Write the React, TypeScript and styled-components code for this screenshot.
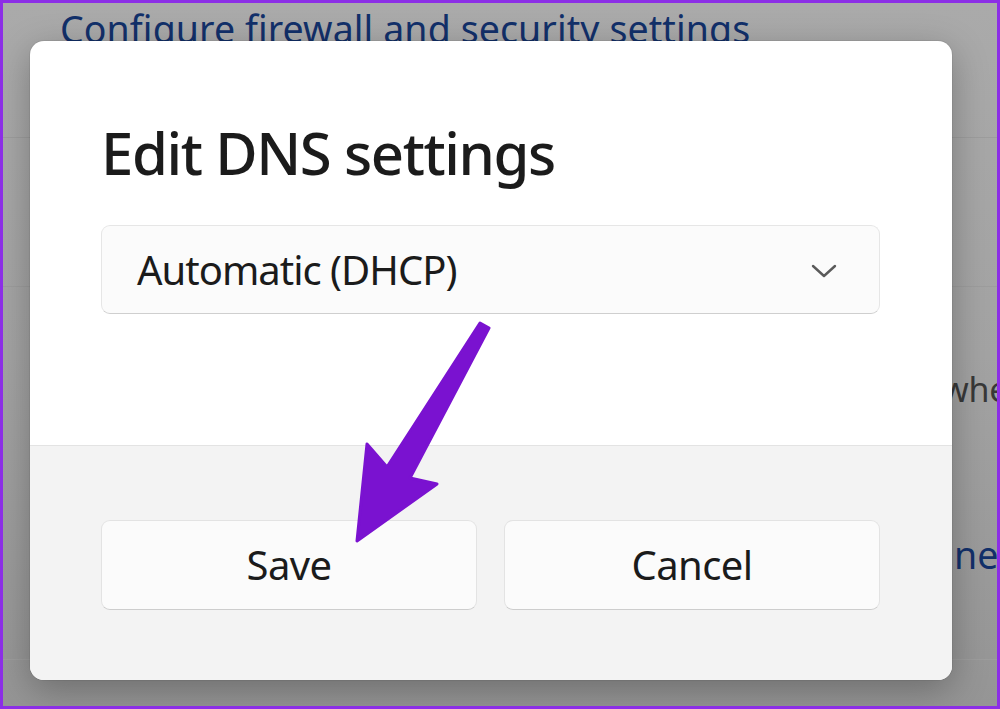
import styled, { createGlobalStyle } from "styled-components";

const GlobalStyle = createGlobalStyle`
  html, body {
    margin: 0;
    padding: 0;
    background: #ffffff;
  }
  * {
    box-sizing: border-box;
  }
`;

const FONT = `"Noto Sans", "Open Sans", sans-serif`;

const App = () => {
  return (
    <>
      <GlobalStyle />
      <Frame>
        <SettingsPage>
          <Row $height={135}>
            <LinkLine>Configure firewall and security settings</LinkLine>
          </Row>
          <Row $height={149} />
          <Row $height={373}>
            <DescLine>when this network is in range</DescLine>
            <LinkLine $indent={954} $top={118}>
              network
            </LinkLine>
          </Row>
          <Row $height={60} $last />
        </SettingsPage>

        <Overlay>
          <Dialog>
            <DialogBody>
              <Title>Edit DNS settings</Title>
              <Select>
                <span>Automatic (DHCP)</span>
                <svg width="26" height="16" viewBox="0 0 26 16">
                  <path
                    d="M2 3 L13 13 L24 3"
                    fill="none"
                    stroke="#5a5a5a"
                    strokeWidth="2.4"
                    strokeLinecap="round"
                    strokeLinejoin="round"
                  />
                </svg>
              </Select>
            </DialogBody>
            <DialogFooter>
              <Button>Save</Button>
              <Button>Cancel</Button>
            </DialogFooter>
          </Dialog>
        </Overlay>

        <ArrowMark viewBox="0 0 1000 709" width="1000" height="709">
          <path
            d="M480 323 L489 328 L410 478 L437 484 L357 541 L367 444 L387 467 Z"
            fill="#7a12d0"
            stroke="#7a12d0"
            strokeWidth="3"
            strokeLinejoin="round"
          />
        </ArrowMark>
      </Frame>
    </>
  );
};

export default App;

const Frame = styled.div`
  position: relative;
  width: 1000px;
  height: 709px;
  border: 3px solid #8c2ee6;
  overflow: hidden;
  font-family: ${FONT};
  background: linear-gradient(180deg, #aaaaaa 0%, #a3a3a3 50%, #959595 100%);
`;

const SettingsPage = styled.div`
  display: flex;
  flex-direction: column;
  width: 100%;
  height: 100%;
`;

const Row = styled.div<{ $height: number; $last?: boolean }>`
  position: relative;
  height: ${(p) => p.$height}px;
  flex: none;
  border-bottom: ${(p) => (p.$last ? "none" : "1px solid #9d9d9d")};
`;

const LinkLine = styled.div<{ $indent?: number; $top?: number }>`
  padding-left: ${(p) => (p.$indent ?? 60) - 3}px;
  margin-top: ${(p) => p.$top ?? 2}px;
  font-size: 37.5px;
  line-height: 48px;
  color: #12306a;
  white-space: nowrap;
  letter-spacing: 0.1px;
`;

const DescLine = styled.div`
  padding-left: 939px;
  margin-top: 78px;
  font-size: 34px;
  line-height: 48px;
  color: #383838;
  white-space: nowrap;
  letter-spacing: -0.3px;
`;

const Overlay = styled.div`
  position: absolute;
  inset: 0;
  display: flex;
  align-items: flex-start;
  justify-content: flex-start;
  padding: 38px 0 0 27px;
`;

const Dialog = styled.div`
  width: 922px;
  height: 639px;
  display: flex;
  flex-direction: column;
  background: #ffffff;
  border-radius: 14px;
  overflow: hidden;
  box-shadow: 0 10px 36px rgba(0, 0, 0, 0.28), 0 0 0 1px rgba(0, 0, 0, 0.06);
`;

const DialogBody = styled.div`
  flex: 1;
  display: flex;
  flex-direction: column;
  padding: 76px 72px 0 71px;
`;

const Title = styled.h1`
  margin: 0;
  font-family: ${FONT};
  font-size: 58px;
  line-height: 72px;
  font-weight: 500;
  color: #1b1b1b;
  letter-spacing: -1.4px;
`;

const Select = styled.div`
  margin-top: 36px;
  height: 89px;
  display: flex;
  align-items: center;
  justify-content: space-between;
  padding: 0 42px 0 35px;
  background: #fbfbfb;
  border: 1px solid #e6e6e6;
  border-bottom-color: #cfcfcf;
  border-radius: 9px;
  font-size: 40px;
  line-height: 50px;
  color: #1b1b1b;
  letter-spacing: -1px;

  svg {
    margin-top: 2px;
  }
`;

const DialogFooter = styled.div`
  height: 235px;
  flex: none;
  display: grid;
  grid-template-columns: 1fr 1fr;
  gap: 27px;
  align-items: center;
  padding: 0 72px 0 71px;
  background: #f3f3f3;
  border-top: 1px solid #e3e3e3;
`;

const Button = styled.button`
  height: 90px;
  display: flex;
  align-items: center;
  justify-content: center;
  background: #fbfbfb;
  border: 1px solid #e3e3e3;
  border-bottom-color: #cdcdcd;
  border-radius: 9px;
  font-family: ${FONT};
  font-size: 40px;
  letter-spacing: -0.6px;
  color: #1b1b1b;
  padding: 0;
  margin-top: 3px;
`;

const ArrowMark = styled.svg`
  position: absolute;
  left: -3px;
  top: -3px;
  pointer-events: none;
`;
